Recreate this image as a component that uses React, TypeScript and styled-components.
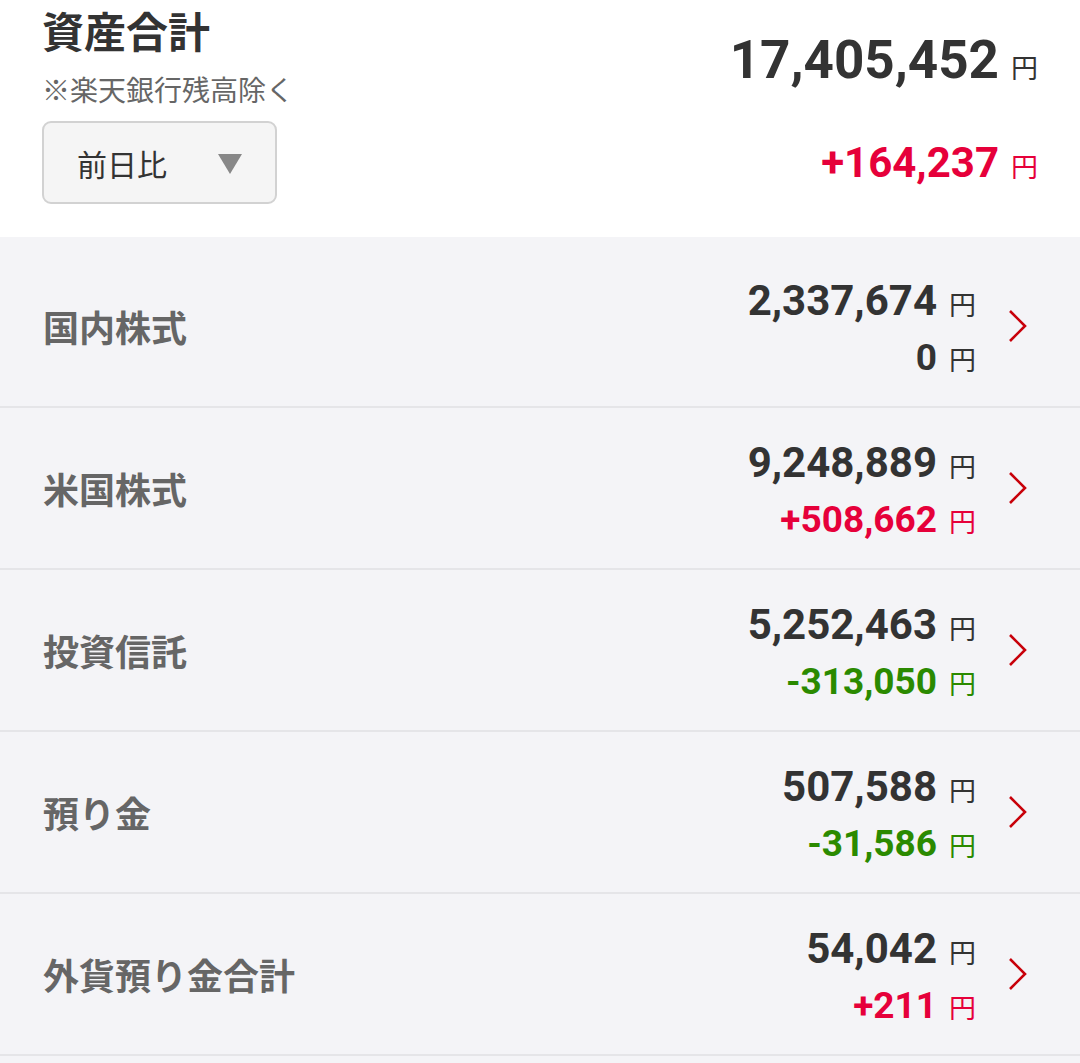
import styled, { createGlobalStyle } from "styled-components";

const GlobalStyle = createGlobalStyle`
	html, body {
		margin: 0;
		padding: 0;
		background: #f4f4f7;
	}
	body {
		font-family: Roboto, "Noto Sans CJK JP", sans-serif;
		color: #333;
	}
`;

const Page = styled.div`
	width: 1080px;
	min-height: 1063px;
	background: #f4f4f7;
`;

const Header = styled.header`
	height: 237px;
	box-sizing: border-box;
	background: #fff;
	display: flex;
	justify-content: space-between;
	padding: 4px 42px 0 42px;
`;

const HeaderLeft = styled.div`
	display: flex;
	flex-direction: column;
	align-items: flex-start;
`;

const Title = styled.h1`
	margin: 0;
	font-family: "Noto Sans CJK JP", sans-serif;
	font-size: 42px;
	font-weight: 700;
	line-height: 52px;
	color: #333;
`;

const Note = styled.div`
	margin-top: 15px;
	font-family: "Noto Sans CJK JP", sans-serif;
	font-size: 28px;
	line-height: 36px;
	color: #666;
`;

const Select = styled.div`
	margin-top: 14px;
	width: 235px;
	height: 83px;
	box-sizing: border-box;
	border: 2px solid #d2d2d2;
	border-radius: 9px;
	background: #f5f5f5;
	display: flex;
	align-items: center;
	justify-content: space-between;
	padding: 0 33px 0 33px;
	font-family: "Noto Sans CJK JP", sans-serif;
	font-size: 30px;
	color: #333;
`;

const Caret = styled.span`
	width: 0;
	height: 0;
	border-left: 12px solid transparent;
	border-right: 12px solid transparent;
	border-top: 20px solid #888;
	margin-top: 2px;
`;

const HeaderRight = styled.div`
	display: flex;
	flex-direction: column;
	align-items: flex-end;
	padding-top: 24px;
`;

const AmountLine = styled.div<{ $gap?: number }>`
	display: flex;
	align-items: baseline;
	margin-top: ${(p) => p.$gap ?? 0}px;
`;

const Amount = styled.span<{ $size: number; $color?: string }>`
	font-family: Roboto, sans-serif;
	font-weight: 700;
	font-size: ${(p) => p.$size}px;
	line-height: ${(p) => Math.round(p.$size * 1.2)}px;
	color: ${(p) => p.$color ?? "#333"};
`;

const Yen = styled.span<{ $color?: string }>`
	margin-left: 12px;
	font-family: "Noto Sans CJK JP", sans-serif;
	font-size: 27px;
	font-weight: 400;
	color: ${(p) => p.$color ?? "#333"};
`;

const List = styled.ul`
	list-style: none;
	margin: 0;
	padding: 9px 0 0 0;
`;

const Row = styled.li`
	height: 160px;
	border-bottom: 2px solid #e5e5e8;
	display: flex;
	align-items: center;
	padding: 0 50px 0 43px;
`;

const Label = styled.div`
	flex: 1;
	font-family: "Noto Sans CJK JP", sans-serif;
	font-size: 36px;
	font-weight: 700;
	color: #666;
`;

const Values = styled.div`
	display: flex;
	flex-direction: column;
	align-items: flex-end;
	padding-top: 4px;
`;

const Chevron = styled.svg`
	margin-left: 30px;
	width: 24px;
	height: 36px;
	flex: none;
`;

const RED = "#e6003a";
const GREEN = "#2b8a00";

type Item = { label: string; value: string; diff: string };

const items: Item[] = [
	{ label: "国内株式", value: "2,337,674", diff: "0" },
	{ label: "米国株式", value: "9,248,889", diff: "+508,662" },
	{ label: "投資信託", value: "5,252,463", diff: "-313,050" },
	{ label: "預り金", value: "507,588", diff: "-31,586" },
	{ label: "外貨預り金合計", value: "54,042", diff: "+211" },
];

function diffColor(d: string) {
	if (d.startsWith("+")) return RED;
	if (d.startsWith("-")) return GREEN;
	return undefined;
}

export default function App() {
	return (
		<Page>
			<GlobalStyle />
			<Header>
				<HeaderLeft>
					<Title>資産合計</Title>
					<Note>※楽天銀行残高除く</Note>
					<Select>
						<span>前日比</span>
						<Caret />
					</Select>
				</HeaderLeft>
				<HeaderRight>
					<AmountLine>
						<Amount $size={53}>17,405,452</Amount>
						<Yen>円</Yen>
					</AmountLine>
					<AmountLine $gap={46}>
						<Amount $size={42} $color={RED}>
							+164,237
						</Amount>
						<Yen $color={RED}>円</Yen>
					</AmountLine>
				</HeaderRight>
			</Header>
			<List>
				{items.map((it) => (
					<Row key={it.label}>
						<Label>{it.label}</Label>
						<Values>
							<AmountLine>
								<Amount $size={42}>{it.value}</Amount>
								<Yen>円</Yen>
							</AmountLine>
							<AmountLine $gap={10}>
								<Amount $size={37} $color={diffColor(it.diff)}>
									{it.diff}
								</Amount>
								<Yen $color={diffColor(it.diff)}>円</Yen>
							</AmountLine>
						</Values>
						<Chevron viewBox="0 0 24 36">
							<polyline
								points="4,3 19,18 4,33"
								fill="none"
								stroke="#c8000a"
								strokeWidth="2.6"
							/>
						</Chevron>
					</Row>
				))}
			</List>
		</Page>
	);
}
